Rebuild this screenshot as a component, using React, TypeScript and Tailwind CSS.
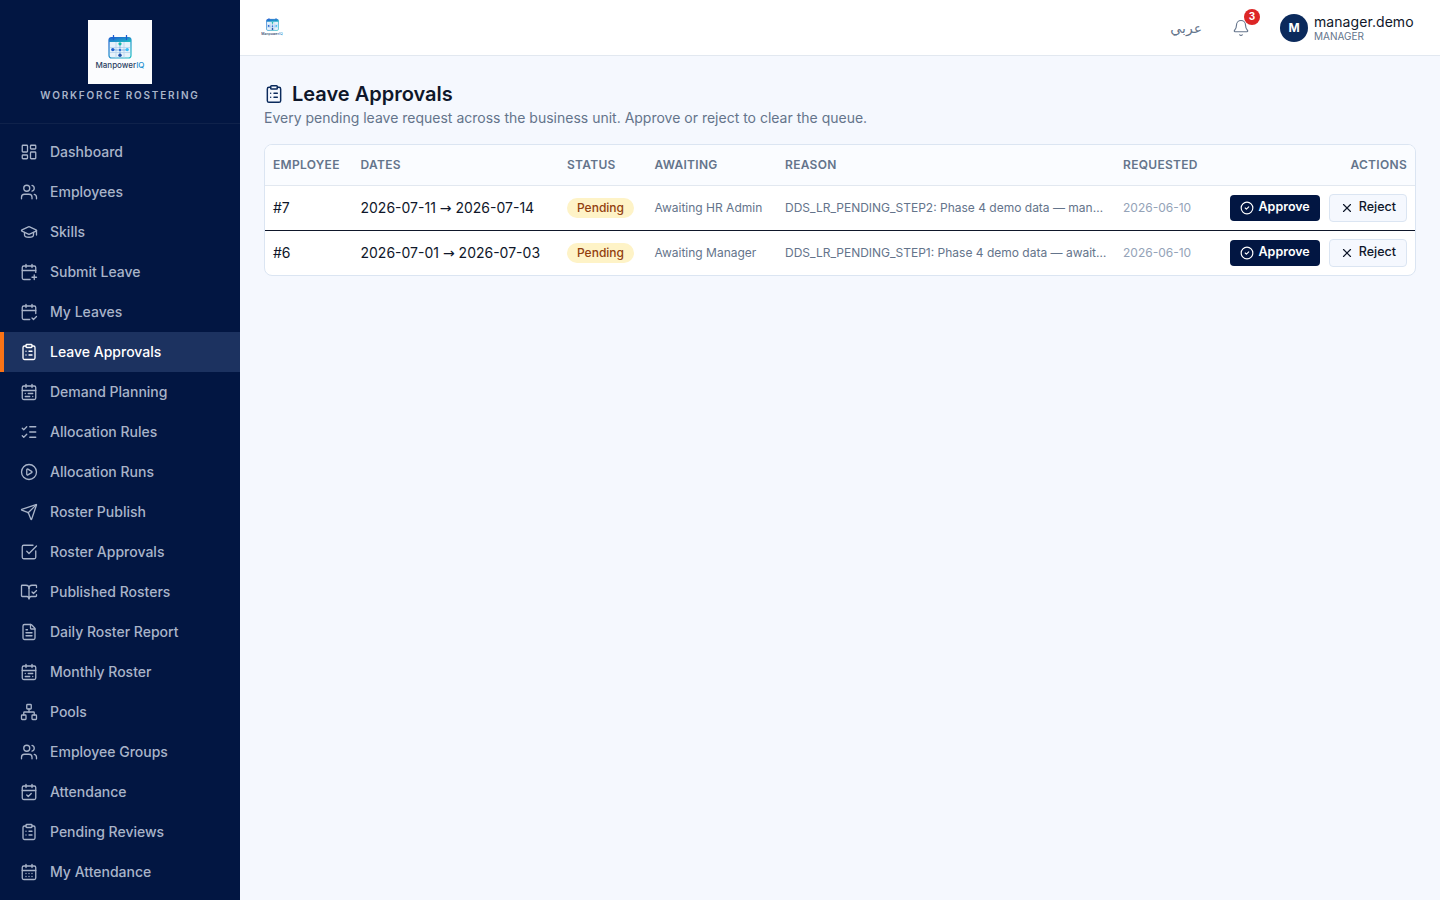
import {
  Bell,
  BookOpenCheck,
  CalendarCheck,
  CalendarCheck2,
  CalendarDays,
  CalendarPlus,
  CalendarRange,
  CircleCheck,
  CirclePlay,
  ClipboardList,
  FileText,
  GraduationCap,
  LayoutDashboard,
  ListChecks,
  Network,
  Send,
  SquareCheckBig,
  Users,
  X,
} from 'lucide-react';

const navItems = [
  { label: 'Dashboard', icon: LayoutDashboard },
  { label: 'Employees', icon: Users },
  { label: 'Skills', icon: GraduationCap },
  { label: 'Submit Leave', icon: CalendarPlus },
  { label: 'My Leaves', icon: CalendarCheck2 },
  { label: 'Leave Approvals', icon: ClipboardList, active: true },
  { label: 'Demand Planning', icon: CalendarRange },
  { label: 'Allocation Rules', icon: ListChecks },
  { label: 'Allocation Runs', icon: CirclePlay },
  { label: 'Roster Publish', icon: Send },
  { label: 'Roster Approvals', icon: SquareCheckBig },
  { label: 'Published Rosters', icon: BookOpenCheck },
  { label: 'Daily Roster Report', icon: FileText },
  { label: 'Monthly Roster', icon: CalendarRange },
  { label: 'Pools', icon: Network },
  { label: 'Employee Groups', icon: Users },
  { label: 'Attendance', icon: CalendarCheck },
  { label: 'Pending Reviews', icon: ClipboardList },
  { label: 'My Attendance', icon: CalendarDays },
];

const rows = [
  {
    id: '#7',
    from: '2026-07-11',
    to: '2026-07-14',
    awaiting: 'Awaiting HR Admin',
    reason: 'DDS_LR_PENDING_STEP2: Phase 4 demo data — manager approved, awaiting HR',
    requested: '2026-06-10',
  },
  {
    id: '#6',
    from: '2026-07-01',
    to: '2026-07-03',
    awaiting: 'Awaiting Manager',
    reason: 'DDS_LR_PENDING_STEP1: Phase 4 demo data — awaiting manager approval',
    requested: '2026-06-10',
  },
];

function LogoMark({ className }: { className?: string }) {
  return (
    <svg viewBox="0 0 24 24" className={className} fill="none" aria-hidden="true">
      <defs>
        <linearGradient id="logo-grad" x1="0" y1="0" x2="1" y2="1">
          <stop offset="0" stopColor="#1d5fd0" />
          <stop offset="1" stopColor="#22c0c4" />
        </linearGradient>
      </defs>
      <rect x="1" y="2.5" width="22" height="20.5" rx="2.5" fill="#e6f2fb" stroke="url(#logo-grad)" strokeWidth="1.2" />
      <path d="M1 7V5A2.5 2.5 0 0 1 3.5 2.5h17A2.5 2.5 0 0 1 23 5v2z" fill="url(#logo-grad)" />
      <path d="M5.5 0.5v4M18.5 0.5v4" stroke="#1d5fd0" strokeWidth="1.3" strokeLinecap="round" />
      <path d="M2 12.5h20M2 17.5h20M8 7v16M16 7v16" stroke="#b6d2ec" strokeWidth="0.8" />
      <path d="M12 9.5v10M5 15h14" stroke="#4a90d9" strokeWidth="0.6" />
      <circle cx="12" cy="8.8" r="1.6" fill="#14b8a6" />
      <circle cx="4.8" cy="14.6" r="1.7" fill="#1d5fd0" />
      <circle cx="19.2" cy="14.6" r="1.7" fill="#38bdf8" />
      <circle cx="12" cy="15" r="1.1" fill="#1d5fd0" />
      <circle cx="12" cy="20.3" r="1.7" fill="#1e4fa8" />
    </svg>
  );
}

function Sidebar() {
  return (
    <aside className="flex h-[900px] w-[240px] shrink-0 flex-col overflow-hidden bg-[#021642]">
      <div className="flex h-[124px] shrink-0 flex-col items-center border-b border-white/5 pt-5">
        <div className="flex h-16 w-16 flex-col items-center bg-[#fbfcfe] pt-[15px]">
          <LogoMark className="h-[24px] w-[24px]" />
          <span className="mt-[1px] text-[8px] font-medium leading-[10px] text-[#2b3f63]">
            Manpower<span className="text-[#1d8fd0]">IQ</span>
          </span>
        </div>
        <div className="mt-[3px] text-[10px] font-semibold leading-[16px] tracking-[0.18em] text-[#a9b4c9]">
          WORKFORCE ROSTERING
        </div>
      </div>
      <nav className="flex flex-col pt-2">
        {navItems.map(({ label, icon: Icon, active }) => (
          <div
            key={label}
            className={
              active
                ? 'flex h-10 shrink-0 items-center gap-3 border-l-4 border-[#f97316] bg-[#1c3260] pl-4 text-sm font-medium text-white'
                : 'flex h-10 shrink-0 items-center gap-3 border-l-4 border-transparent pl-4 text-sm font-medium text-[#a9b4c9]'
            }
          >
            <Icon size={18} strokeWidth={1.75} className="shrink-0" />
            <span>{label}</span>
          </div>
        ))}
      </nav>
    </aside>
  );
}

function Topbar() {
  return (
    <header className="flex h-[56px] shrink-0 items-center justify-between border-b border-[#e2e8f0] bg-white pl-[18px] pr-[26px]">
      <div className="flex h-7 w-7 flex-col items-center justify-center">
        <LogoMark className="h-[13px] w-[13px]" />
        <span className="mt-[1px] text-[3.5px] font-medium leading-[5px] text-[#27406b]">
          Manpower<span className="text-[#1d8fd0]">IQ</span>
        </span>
      </div>
      <div className="flex items-center">
        <span className="text-sm text-[#64748b]" dir="rtl" style={{ fontFamily: '"DejaVu Sans", sans-serif' }}>
          عربي
        </span>
        <div className="relative ml-[30px] mr-[30px]">
          <Bell size={18} strokeWidth={1.5} className="text-[#64748b]" />
          <span className="absolute -right-[10px] -top-[10px] flex h-4 w-4 items-center justify-center rounded-full bg-[#dc2626] text-[10px] font-bold text-white">
            3
          </span>
        </div>
        <div className="flex h-7 w-7 items-center justify-center rounded-full bg-[#0b2a5c] text-xs font-bold text-white">
          M
        </div>
        <div className="ml-1.5 flex w-[100px] flex-col">
          <span className="text-sm font-normal leading-[16px] tracking-[0.005em] text-[#0f172a]">manager.demo</span>
          <span className="text-[10px] leading-[12px] text-[#64748b]">MANAGER</span>
        </div>
      </div>
    </header>
  );
}

function LeaveTable() {
  const th = 'px-2 text-left text-xs font-semibold tracking-wide text-[#64748b]';
  return (
    <div className="mt-4 overflow-hidden rounded-lg border border-[#dbe5f2] bg-white">
      <table className="w-full table-fixed border-collapse">
        <colgroup>
          <col className="w-[87.5px]" />
          <col className="w-[206.5px]" />
          <col className="w-[87.5px]" />
          <col className="w-[130.5px]" />
          <col className="w-[338px]" />
          <col className="w-[100px]" />
          <col />
        </colgroup>
        <thead>
          <tr className="h-[40px] border-b border-[#e2e8f0] bg-[#fafcff]">
            <th className={th}>EMPLOYEE</th>
            <th className={th}>DATES</th>
            <th className={th}>STATUS</th>
            <th className={th}>AWAITING</th>
            <th className={th}>REASON</th>
            <th className={th}>REQUESTED</th>
            <th className="px-2 text-right text-xs font-semibold tracking-wide text-[#64748b]">ACTIONS</th>
          </tr>
        </thead>
        <tbody>
          {rows.map((row, i) => (
            <tr key={row.id} className={i === 0 ? 'h-[45px] border-b border-[#0f172a]' : 'h-[45px]'}>
              <td className="px-2 text-sm text-[#0f172a]">{row.id}</td>
              <td className="whitespace-nowrap px-2 text-sm text-[#0f172a]">
                {row.from} <span style={{ fontFamily: '"DejaVu Sans", sans-serif' }}>→</span> {row.to}
              </td>
              <td className="px-2">
                <span className="flex h-5 w-fit items-center rounded-full bg-[#fef3c7] px-2.5 text-xs font-medium text-[#92400e]">
                  Pending
                </span>
              </td>
              <td className="whitespace-nowrap px-2 text-xs text-[#64748b]">{row.awaiting}</td>
              <td className="truncate px-2 text-xs text-[#64748b]">{row.reason}</td>
              <td className="px-2 text-xs text-[#94a3b8]">{row.requested}</td>
              <td className="px-2">
                <div className="flex items-center justify-end gap-[9px]">
                  <button className="flex h-[26px] items-center gap-[5px] rounded bg-[#021642] px-2.5 text-[12.5px] font-semibold text-white">
                    <CircleCheck size={14} strokeWidth={2} />
                    <span className="mb-px">Approve</span>
                  </button>
                  <button className="flex h-7 items-center gap-[5px] rounded border border-[#dbe5f2] bg-[#f5f8fe] px-2.5 text-[12.5px] font-medium text-[#0f172a]">
                    <X size={14} strokeWidth={2} />
                    <span className="mb-px">Reject</span>
                  </button>
                </div>
              </td>
            </tr>
          ))}
        </tbody>
      </table>
    </div>
  );
}

export default function App() {
  return (
    <div
      className="flex h-[900px] w-full overflow-hidden bg-[#f5f8fe]"
      style={{ fontFamily: 'Inter, "DejaVu Sans", sans-serif' }}
    >
      <Sidebar />
      <div className="flex min-w-0 flex-1 flex-col">
        <Topbar />
        <main className="px-6 pt-6">
          <div className="flex items-center gap-2">
            <ClipboardList size={20} strokeWidth={1.75} className="text-[#0b2a5c]" />
            <h1 className="text-xl font-semibold leading-7 text-[#0f172a]">Leave Approvals</h1>
          </div>
          <p className="text-sm leading-5 text-[#64748b]">
            Every pending leave request across the business unit. Approve or reject to clear the queue.
          </p>
          <LeaveTable />
        </main>
      </div>
    </div>
  );
}
